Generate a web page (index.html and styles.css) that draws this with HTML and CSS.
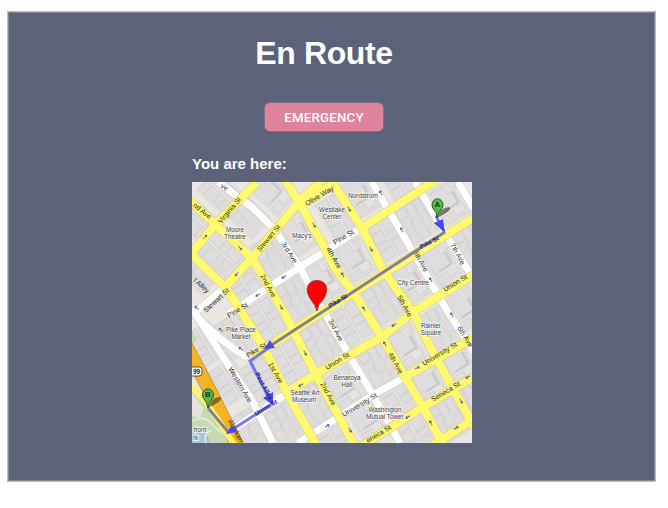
FILE: index.html
```html
<!DOCTYPE html>
<html lang="en">
<head>
<meta charset="utf-8">
<title>En Route</title>
<link rel="stylesheet" href="styles.css">
</head>
<body>
<main class="panel">
<header class="heading">
<h1>En Route</h1>
<button class="emergency" type="button">EMERGENCY</button>
</header>
<section class="location">
<h2>You are here:</h2>
<svg class="map" viewBox="192 182 280 261" width="280" height="261" preserveAspectRatio="none">
<defs>
<g id="block" class="building">
<path class="lot" d="M-15-20H15V20H-15Z"/>
<path d="M-13-19H-3V-10H-13ZM-2-19H6V-6H-2ZM7-19H14V-3H7ZM-13-9H-3V-1H-13ZM-13 1H-5V18H-13ZM-4-4H5V6H-4ZM-3 8H6V18H-3ZM7-1H14V9H7ZM7 11H14V18H7Z"/>
</g>
<g id="large" class="building">
<path class="lot" d="M-15-20H15V20H-15Z"/>
<path d="M-13-18H2V-8H8V6H-13ZM4-18H13V-10H10V15H-1V9H-13V18H13"/>
<path class="shade" d="M-8 4V6H8V-8H6V4Z"/>
</g>
<g id="rows" class="building">
<path class="lot" d="M-15-20H15V20H-15Z"/>
<path d="M-13-19H-1V-12H-13ZM-13-11H-1V0H-13ZM-13 1H-1V7H-13ZM-13 8H-1V18H-13ZM2-19H13V-5H2ZM2-4H13V3H2ZM2 4H13V18H2Z"/>
</g>
<path id="arrow" class="oneway" d="M-2.5 0H2.5M.8-1.3 2.5 0 .8 1.3"/>
</defs>
<path fill="#e9e7df" d="M192 182h280v261H192z"/>
<g>
<use href="#rows" transform="matrix(.68 -.73 .73 .68 203 226)"/>
<use href="#rows" transform="matrix(.68 -.73 .73 .68 221 193)"/>
<use href="#block" transform="matrix(.68 -.73 .73 .68 247 216)"/>
<use href="#rows" transform="matrix(.68 -.73 .73 .68 221 253)"/>
<use href="#large" transform="matrix(.68 -.73 .73 .68 273 193)"/>
<use href="#block" transform="matrix(.68 -.73 .73 .68 198 272)"/>
<use href="#block" transform="matrix(.84 -.54 .5 .86 272 256)"/>
<use href="#large" transform="matrix(.84 -.54 .5 .86 299 233)"/>
<use href="#rows" transform="matrix(.84 -.54 .5 .86 243 282)"/>
<use href="#rows" transform="matrix(.84 -.54 .5 .86 266 320)"/>
<use href="#block" transform="matrix(.84 -.54 .5 .86 295 300)"/>
<use href="#large" transform="matrix(.84 -.54 .5 .86 325 280)"/>
<use href="#rows" transform="matrix(.84 -.54 .5 .86 337 215)"/>
<use href="#large" transform="matrix(.84 -.54 .5 .86 361 196)"/>
<use href="#rows" transform="matrix(.84 -.54 .5 .86 398 178)"/>
<use href="#large" transform="matrix(.84 -.54 .5 .86 356 260)"/>
<use href="#rows" transform="matrix(.84 -.54 .5 .86 388 239)"/>
<use href="#block" transform="matrix(.84 -.54 .5 .86 416 222)"/>
<use href="#large" transform="matrix(.84 -.54 .5 .86 450 202)"/>
<use href="#large" transform="matrix(.84 -.54 .5 .86 412 282)"/>
<use href="#large" transform="matrix(.84 -.54 .5 .86 443 263)"/>
<use href="#block" transform="matrix(.84 -.54 .5 .86 473 246)"/>
<use href="#block" transform="matrix(.84 -.54 .5 .86 383 303)"/>
<use href="#rows" transform="matrix(.84 -.54 .5 .86 352 324)"/>
<use href="#block" transform="matrix(.84 -.54 .5 .86 320 343)"/>
<use href="#rows" transform="matrix(.84 -.54 .5 .86 290 363)"/>
<use href="#block" transform="matrix(.84 -.54 .5 .86 378 366)"/>
<use href="#large" transform="matrix(.84 -.54 .5 .86 345 388)"/>
<use href="#block" transform="matrix(.84 -.54 .5 .86 312 407)"/>
<use href="#large" transform="matrix(.84 -.54 .5 .86 408 347)"/>
<use href="#block" transform="matrix(.84 -.54 .5 .86 438 328)"/>
<use href="#large" transform="matrix(.84 -.54 .5 .86 466 309)"/>
<use href="#large" transform="matrix(.84 -.54 .5 .86 430 383)"/>
<use href="#rows" transform="matrix(.84 -.54 .5 .86 400 402)"/>
<use href="#large" transform="matrix(.84 -.54 .5 .86 368 420)"/>
<use href="#large" transform="matrix(.84 -.54 .5 .86 460 363)"/>
<use href="#block" transform="matrix(.84 -.54 .5 .86 448 421)"/>
<use href="#rows" transform="matrix(.84 -.54 .5 .86 417 437)"/>
<use href="#block" transform="matrix(.84 -.54 .5 .86 471 400)"/>
<use href="#rows" transform="matrix(.84 -.54 .5 .86 336 443)"/>
<use href="#block" transform="matrix(.84 -.54 .5 .86 233 337)"/>
<use href="#rows" transform="matrix(.84 -.54 .5 .86 260 380)"/>
<use href="#block" transform="matrix(.84 -.54 .5 .86 285 425)"/>
<use href="#rows" transform="matrix(.84 -.54 .5 .86 230 382)"/>
<use href="#block" transform="matrix(.84 -.54 .5 .86 253 428)"/>
<use href="#rows" transform="matrix(.84 -.54 .5 .86 206 345)"/>
</g>
<path fill="#c6d9b3" d="M192 390q14 4 19 18l12 16 13 19h-44zM192 331l5 8-5 6z"/>
<path fill="#e3e2da" d="M192 393l12 15-3 10-9-2z"/>
<path fill="#a9c6dc" d="M192 435q8-7 15-1l4 9h-19z"/>
<path fill="none" stroke="#eee9df" stroke-width="1.5" d="M192 421q12-6 20 3t12 8M211 430q-8 4-5 13"/>

<g class="road road-case">
<path d="M218 182 253 208 273 228 300 267 317 300 352 360 373 395 400 443M225 287 192 315M362 228 300 267 228 314M192 308 223 357 252 400 273 443M197 317Q220 341 248 358M287 393 228 433M405 377 373 395 298 443M372 182 413 252 448 312 474 352M415 182 445 233 474 280M458 182 474 209"/>
</g>
<g class="road road-white">
<path d="M218 182 253 208 273 228 300 267 317 300 352 360 373 395 400 443M225 287 192 315M362 228 300 267 228 314M192 308 223 357 252 400 273 443M197 317Q220 341 248 358M287 393 228 433M405 377 373 395 298 443M372 182 413 252 448 312 474 352M415 182 445 233 474 280M458 182 474 209"/>
</g>
<path class="highway-case" d="M184 342 210 391 238 447"/>
<path class="highway" d="M184 342 210 391 238 447"/>
<g class="road yellow-case">
<path d="M257 182 215 225 189 256M189 200 215 224 252 258 285 314 315 373 355 446M285 180 299 202 322 243 335 268 353 292 382 337 405 377 423 407 444 446M322 180 299 202 252 258 225 287M299 204Q315 199 336 180M331 180 362 228 383 270 413 312 437 360 475 428M362 228 436 180M189 252 225 287 242 312 267 353 287 393 317 446M475 217 322 312 252 357M475 274 413 312 382 337 330 366 287 392M475 337 405 377M475 376 423 407 362 446M475 418 432 446"/>
</g>
<g class="road yellow">
<path d="M257 182 215 225 189 256M189 200 215 224 252 258 285 314 315 373 355 446M285 180 299 202 322 243 335 268 353 292 382 337 405 377 423 407 444 446M322 180 299 202 252 258 225 287M299 204Q315 199 336 180M331 180 362 228 383 270 413 312 437 360 475 428M362 228 436 180M189 252 225 287 242 312 267 353 287 393 317 446M475 217 322 312 252 357M475 274 413 312 382 337 330 366 287 392M475 337 405 377M475 376 423 407 362 446M475 418 432 446"/>
</g>
<path class="waterfront" d="M190 386Q205 398 227 434L235 446"/>

<g>
<use href="#arrow" transform="translate(205 237) rotate(-45)"/>
<use href="#arrow" transform="translate(240 248) rotate(50)"/>
<use href="#arrow" transform="translate(237 274) rotate(135)"/>
<use href="#arrow" transform="translate(284 277) rotate(150)"/>
<use href="#arrow" transform="translate(258 295) rotate(150)"/>
<use href="#arrow" transform="translate(314 225) rotate(60)"/>
<use href="#arrow" transform="translate(281 307) rotate(60)"/>
<use href="#arrow" transform="translate(349 209) rotate(60)"/>
<use href="#arrow" transform="translate(371 249) rotate(60)"/>
<use href="#arrow" transform="translate(381 193) rotate(-120)"/>
<use href="#arrow" transform="translate(402 230) rotate(-120)"/>
<use href="#arrow" transform="translate(343 275) rotate(-120)"/>
<use href="#arrow" transform="translate(364 309) rotate(-120)"/>
<use href="#arrow" transform="translate(431 280) rotate(-120)"/>
<use href="#arrow" transform="translate(452 315) rotate(-120)"/>
<use href="#arrow" transform="translate(394 325) rotate(150)"/>
<use href="#arrow" transform="translate(385 344) rotate(-120)"/>
<use href="#arrow" transform="translate(417 368) rotate(-25)"/>
<use href="#arrow" transform="translate(468 377) rotate(150)"/>
<use href="#arrow" transform="translate(461 401) rotate(60)"/>
<use href="#arrow" transform="translate(408 417) rotate(150)"/>
<use href="#arrow" transform="translate(431 423) rotate(-120)"/>
<use href="#arrow" transform="translate(456 428) rotate(-30)"/>
<use href="#arrow" transform="translate(350 430) rotate(60)"/>
<use href="#arrow" transform="translate(305 353) rotate(60)"/>
<use href="#arrow" transform="translate(301 385) rotate(150)"/>
<use href="#arrow" transform="translate(327 426) rotate(-30)"/>
<use href="#arrow" transform="translate(241 349) rotate(-145)"/>
<use href="#arrow" transform="translate(221 330) rotate(-145)"/>
<use href="#arrow" transform="translate(197 308) rotate(-145)"/>
</g>

<g class="place">
<text x="363" y="198">Nordstrom</text>
<text x="332" y="212">Westlake</text><text x="332" y="219">Center</text>
<text x="235" y="232">Moore</text><text x="235" y="239">Theatre</text>
<text x="302" y="238">Macy's</text>
<text x="413" y="284.5">City Centre</text>
<text x="431" y="327.5">Rainier</text><text x="431" y="335">Square</text>
<text x="241" y="331.5">Pike Place</text><text x="241" y="339">Market</text>
<text x="305" y="394.5">Seattle Art</text><text x="304" y="402">Museum</text>
<text x="347" y="380">Benaroya</text><text x="347" y="387">Hall</text>
<text x="385" y="412">Washington</text><text x="385" y="419">Mutual Tower</text>
<text x="200" y="432">front</text><text x="195.5" y="440">rk</text>
</g>
<g class="street">
<text transform="translate(192.5 206) rotate(39)">nd Ave</text>
<text transform="translate(221 224) rotate(-50)">Virginia St</text>
<text transform="translate(260 252) rotate(-50)">Stewart St</text>
<text transform="translate(307 206) rotate(-31)">Olive Way</text>
<text transform="translate(281 244) rotate(57)">3rd Ave</text>
<text transform="translate(220 187) rotate(34)">ve</text>
<text transform="translate(260 276) rotate(61)">2nd Ave</text>
<text transform="translate(326 249) rotate(60)">4th Ave</text>
<text transform="translate(335 245) rotate(-31)">Pine St</text>
<text transform="translate(229 318) rotate(-31)">Pine St</text>
<text transform="translate(206 313) rotate(-43)">Stewart St</text>
<text transform="translate(193 281) rotate(42)">t Alley</text>
<text transform="translate(413 252) rotate(61)">6th Ave</text>
<text transform="translate(450 245) rotate(61)">7th Ave</text>
<text transform="translate(445 292) rotate(-31)">Union St</text>
<text transform="translate(397 297) rotate(61)">5th Ave</text>
<text transform="translate(328 321) rotate(61)">3rd Ave</text>
<text transform="translate(327 370) rotate(-31)">Union St</text>
<text transform="translate(388 354) rotate(61)">4th Ave</text>
<text transform="translate(457 328) rotate(58)">6th Ave</text>
<text transform="translate(424 366) rotate(-31)">University St</text>
<text transform="translate(433 402) rotate(-31)">Seneca St</text>
<text transform="translate(344 417) rotate(-31)">University St</text>
<text transform="translate(368 443) rotate(-31)">eneca St</text>
<text transform="translate(268 364) rotate(61)">1st Ave</text>
<text transform="translate(320 384) rotate(61)">2nd Ave</text>
<text transform="translate(228 369) rotate(59)">Western Ave</text>
<text transform="translate(248 358) rotate(-31)">Pike St</text>
<text transform="translate(227.5 421) rotate(61)">Alaskan</text>
</g>

<path class="route return" d="M445 232 267 348"/>
<path class="route" d="M436 216 444 231M270 347 250 361 272 404 227 433"/>
<path class="route return" d="M229 433 208 408"/>
<path class="heads" d="M434 223 443 219 445 233zM264 349 270 340 275 348zM263 398 273 392 273 405zM226 434 232 425 237 432z"/>
<g class="street route-name">
<text transform="translate(421 249) rotate(-27)">Pike St</text>
<text transform="translate(330 308) rotate(-31)">Pike St</text>
<text transform="translate(255 374) rotate(61)">Post Alley</text>
<text transform="translate(256 416) rotate(-31)">Union St</text>
</g>

<path class="pin-shadow" d="M208 408q5-12 12-11 5 3-12 11zM437 218q4-11 12-11 5 3-12 11z"/>
<g class="marker">
<path d="M208 408Q207 402 204 399A5.5 6 0 1 1 212 399Q209 402 208 408Z"/>
<path d="M437 218Q437 212 433.5 209A5.5 6 0 1 1 441.5 209Q438 212 437 218Z"/>
<text x="208" y="396.5">B</text><text x="437.5" y="206.7">A</text>
</g>
<rect x="188" y="367" width="14" height="9" rx="3" fill="#fff" stroke="#333" stroke-width=".8"/>
<text class="shield" x="193" y="374">99</text>
<path class="current" d="M317 311Q315 304 310.5 299C304 289 308 280.5 317 280.5S330 289 323.5 299Q318 304 317 311Z"/>
</svg>
</section>
</main>
</body>
</html>
```
FILE: styles.css
```css
body {
  margin: 11px 12px 0 7px;
  background: #fff;
  font-family: "Liberation Sans", Arial, sans-serif;
}
.panel {
  box-sizing: border-box;
  height: 471px;
  border: 1px solid #bdbdbb;
  box-shadow: inset 0 0 0 1px #86868d;
  background: #5b627a;
  color: #fff;
}
.heading {
  display: flex;
  flex-direction: column;
  align-items: center;
  padding: 23px 15px 0 0;
}
h1 {
  margin: 0;
  font-size: 32px;
  letter-spacing: -.35px;
  line-height: 37px;
}
.emergency {
  box-sizing: border-box;
  width: 120px;
  height: 30px;
  margin-top: 30px;
  padding: 0;
  border: 1.5px solid #777783;
  border-radius: 6px;
  background: #df829b;
  color: #fff;
  font: 500 13.3px Roboto, sans-serif;
  letter-spacing: .2px;
}
.location {
  width: 280px;
  margin: 23px auto 0 184px;
}
h2 {
  margin: 0 0 9px;
  font-size: 15px;
  line-height: 18px;
}
.map {
  display: block;
  overflow: hidden;
}
.building {
  fill: #dfdddd;
  stroke: #cac8c8;
  stroke-width: .6;
}
.building .lot {
  fill: #e5e3e0;
  stroke: #d8d5d2;
}
.building .shade {
  fill: #cac8c8;
  stroke: none;
}
.road {
  fill: none;
  stroke-linejoin: round;
}
.road-case {
  stroke: #d0cdc8;
  stroke-width: 8.2;
}
.road-white {
  stroke: #fff;
  stroke-width: 7;
}
.yellow-case {
  stroke: #d8cf91;
  stroke-width: 9.2;
}
.yellow {
  stroke: #fff970;
  stroke-width: 8;
}
.highway-case, .highway {
  fill: none;
  stroke: #c58e28;
  stroke-width: 14;
}
.highway {
  stroke: #f4b225;
  stroke-width: 12.5;
}
.waterfront {
  fill: none;
  stroke: #fff36a;
  stroke-width: 6;
}
.oneway {
  fill: none;
  stroke: #6262a4;
  stroke-width: .9;
}
.place, .street {
  fill: #3d3d3d;
  stroke: #f5f5f3;
  stroke-width: 1.5;
  paint-order: stroke;
}
.place {
  font-size: 6.3px;
  text-anchor: middle;
}
.street {
  font-size: 7px;
  fill: #292929;
  stroke: none;
}
.route {
  fill: none;
  stroke: #4444ff;
  stroke-opacity: .7;
  stroke-width: 3;
}
.return {
  stroke: #85818d;
  stroke-opacity: 1;
}
.heads {
  fill: #4848f5;
}
.route-name {
  fill: #20207c;
  font-weight: bold;
  font-size: 6.2px;
}
.pin-shadow {
  fill: #333;
  opacity: .6;
}
.marker path {
  fill: #58b947;
  stroke: #1d531d;
  stroke-width: 1;
}
.marker text {
  font-size: 8px;
  font-weight: bold;
  text-anchor: middle;
  fill: #173c18;
}
.shield {
  font-size: 6.5px;
  font-weight: bold;
  fill: #222;
}
.current {
  fill: #f00;
  stroke: #8f4140;
  stroke-width: 1;
}
```
